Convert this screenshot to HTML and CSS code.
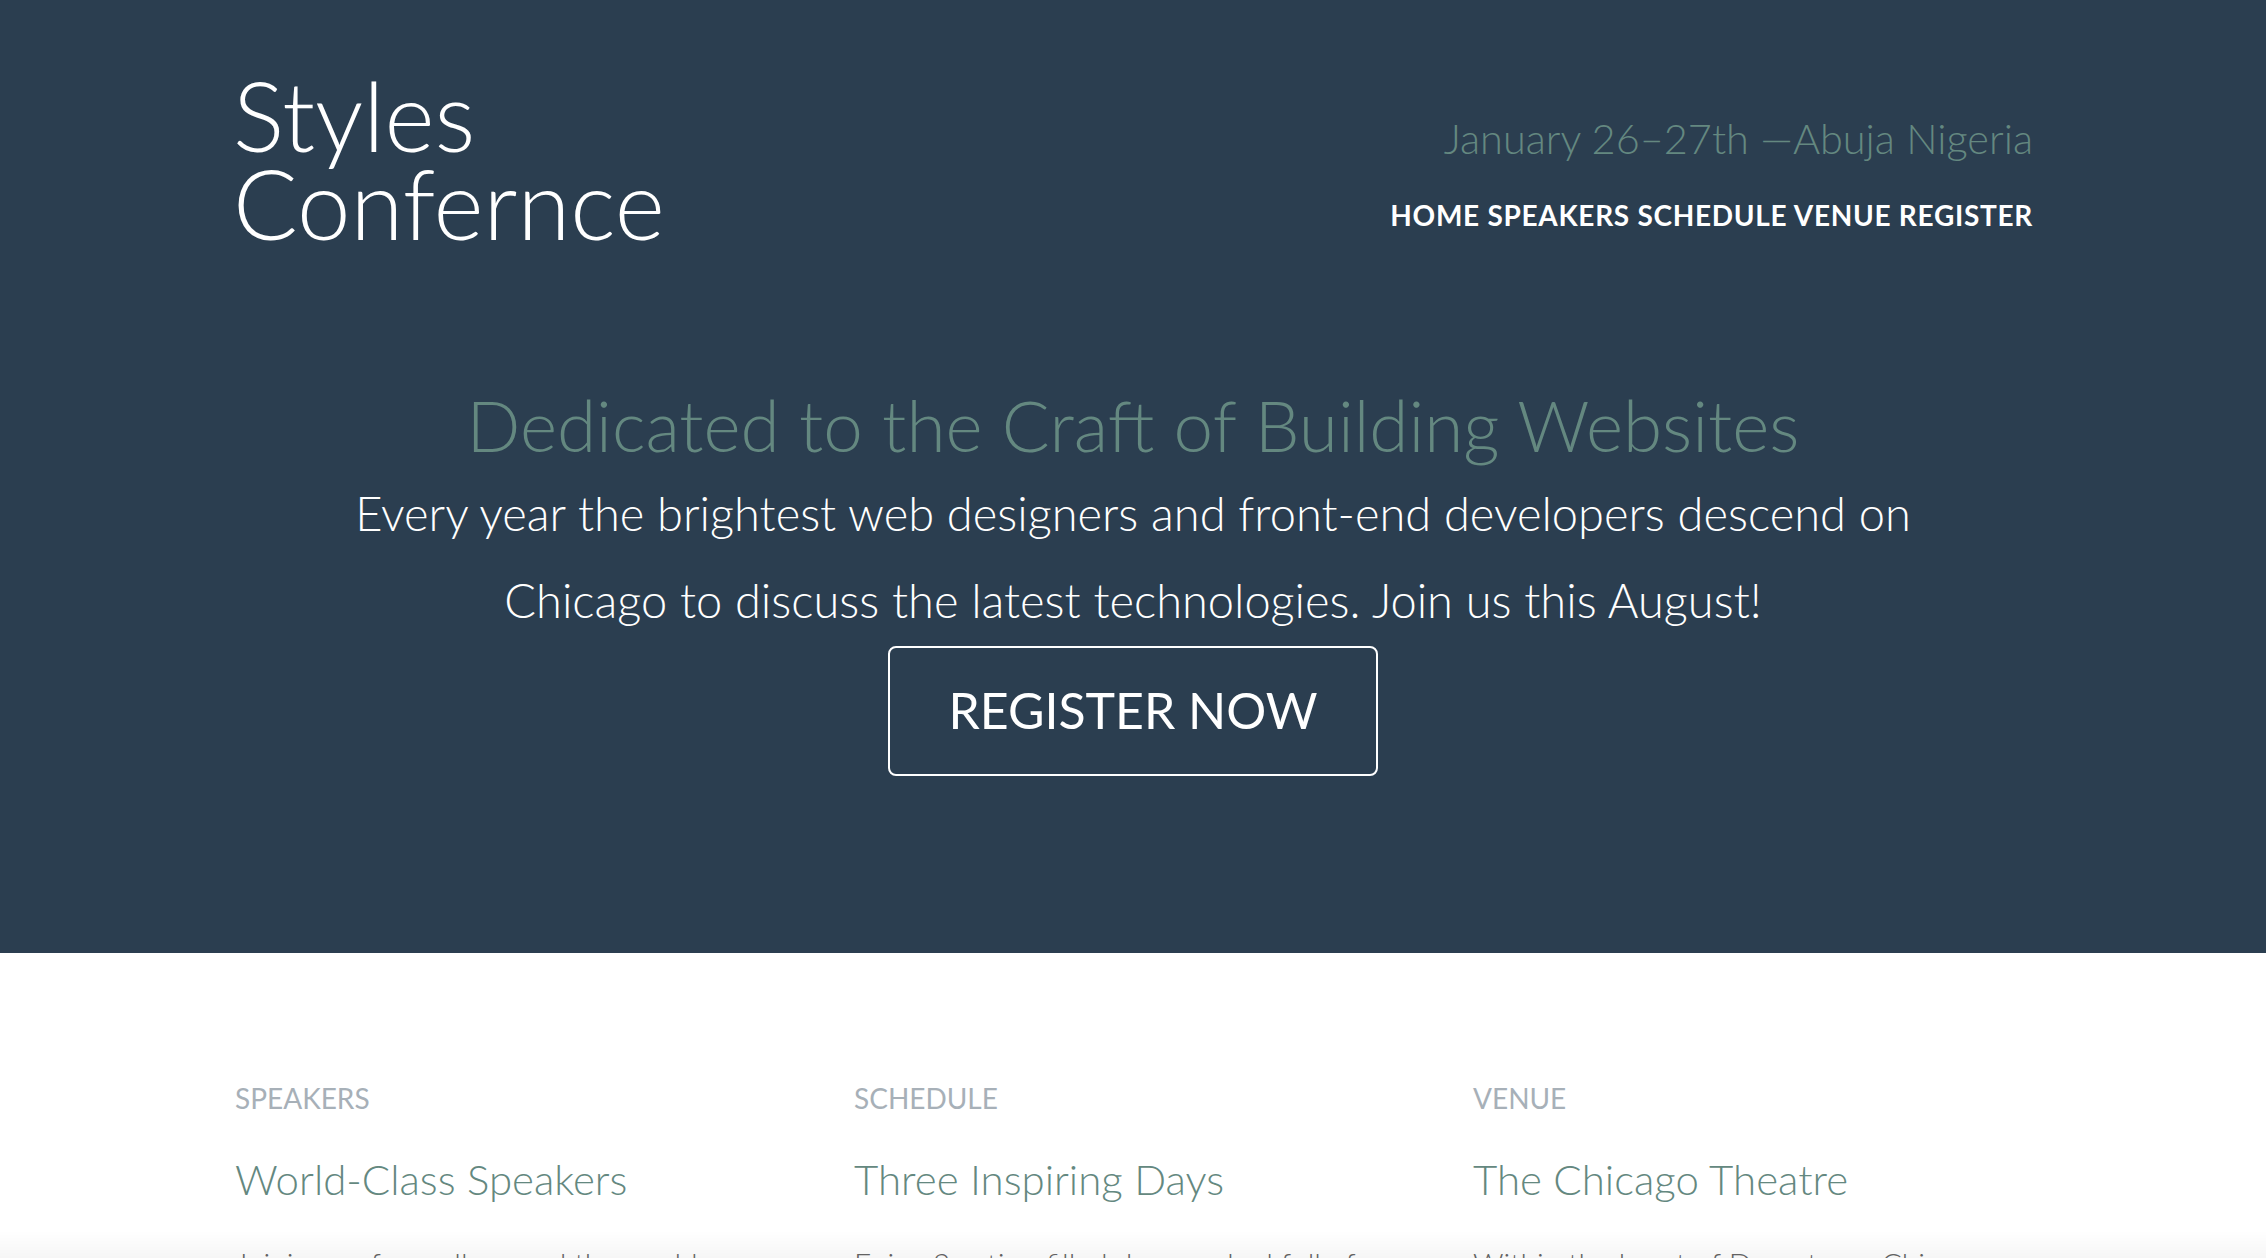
FILE: index.html
```html
<!DOCTYPE html>
<html lang="en">
<head>
<meta charset="utf-8">
<title>Styles Conference</title>
<link rel="stylesheet" href="styles.css">
</head>
<body>
<header class="hero">
  <div class="container header-bar">
    <h1 class="logo">Styles<br>Confernce</h1>
    <div class="header-info">
      <h3 class="tagline">January 26–27th —Abuja Nigeria</h3>
      <nav class="nav">
        <a href="#">Home</a>
        <a href="#">Speakers</a>
        <a href="#">Schedule</a>
        <a href="#">Venue</a>
        <a href="#">Register</a>
      </nav>
    </div>
  </div>
  <section class="container intro">
    <h2 class="intro-title">Dedicated to the Craft of Building Websites</h2>
    <p class="intro-text">Every year the brightest web designers and front-end developers descend on Chicago to discuss the latest technologies. Join us this August!</p>
    <a class="btn" href="#">Register Now</a>
  </section>
</header>
<main class="container teasers">
  <section class="teaser">
    <h5 class="teaser-label">Speakers</h5>
    <h3 class="teaser-title">World-Class Speakers</h3>
    <p class="teaser-text">Joining us from all around the world are over twenty fantastic speakers, each ready to share their experiences.</p>
  </section>
  <section class="teaser">
    <h5 class="teaser-label">Schedule</h5>
    <h3 class="teaser-title">Three Inspiring Days</h3>
    <p class="teaser-text">Enjoy 3 action filled days packed full of talks, workshops, and plenty of networking.</p>
  </section>
  <section class="teaser">
    <h5 class="teaser-label">Venue</h5>
    <h3 class="teaser-title">The Chicago Theatre</h3>
    <p class="teaser-text">Within the heart of Downtown Chicago, the theatre is an iconic landmark.</p>
  </section>
</main>
<div class="fade"></div>
</body>
</html>
```
FILE: styles.css
```css
* { box-sizing: border-box; }
html, body { margin: 0; padding: 0; }
body {
  font-family: "Lato", "Open Sans", sans-serif;
  font-weight: 300;
  color: #888888;
  background: #ffffff;
}
h1, h2, h3, h5, p { margin: 0; font-weight: 300; }
a { text-decoration: none; color: inherit; }

.container {
  width: 1800px;
  margin: 0 auto;
}

.hero {
  background: #2b3e50;
  padding: 71px 0 177px;
}

.header-bar {
  display: flex;
  justify-content: space-between;
  align-items: flex-start;
}

.logo {
  color: #ffffff;
  font-size: 96px;
  line-height: 88px;
  font-weight: 300;
}

.header-info {
  display: flex;
  flex-direction: column;
  align-items: flex-end;
  padding-top: 42px;
}

.tagline {
  color: #648880;
  font-size: 41.5px;
  line-height: 50px;
  font-weight: 300;
}

.nav {
  margin-top: 35px;
  font-size: 28px;
  line-height: 34px;
  font-weight: 700;
  letter-spacing: 0.7px;
  text-transform: uppercase;
  color: #ffffff;
}

.intro {
  margin-top: 133px;
  text-align: center;
  display: flex;
  flex-direction: column;
  align-items: center;
}

.intro-title {
  color: #648880;
  font-size: 71px;
  line-height: 90px;
  font-weight: 300;
}

.intro-text {
  color: #ffffff;
  font-size: 47px;
  line-height: 87px;
  font-weight: 300;
  width: 1650px;
}

.btn {
  margin-top: 2px;
  border: 2px solid #ffffff;
  border-radius: 8px;
  color: #ffffff;
  font-size: 50px;
  line-height: 60px;
  font-weight: 400;
  text-transform: uppercase;
  padding: 32px 58px 34px;
}

.teasers {
  display: grid;
  grid-template-columns: repeat(3, 562px);
  column-gap: 57px;
  padding-top: 128px;
  padding-left: 2px;
}

.teaser-label {
  font-size: 28px;
  line-height: 34px;
  font-weight: 400;
  text-transform: uppercase;
  color: #a7b0b8;
}

.teaser-title {
  margin-top: 39px;
  font-size: 42px;
  line-height: 50px;
  font-weight: 300;
  color: #648880;
}

.teaser-text {
  margin-top: 37px;
  font-size: 30px;
  line-height: 44px;
  color: #666666;
}

.fade {
  position: fixed;
  left: 0;
  right: 0;
  bottom: 0;
  height: 28px;
  background: linear-gradient(to bottom, rgba(0,0,0,0), rgba(0,0,0,0.035));
  pointer-events: none;
}
```
